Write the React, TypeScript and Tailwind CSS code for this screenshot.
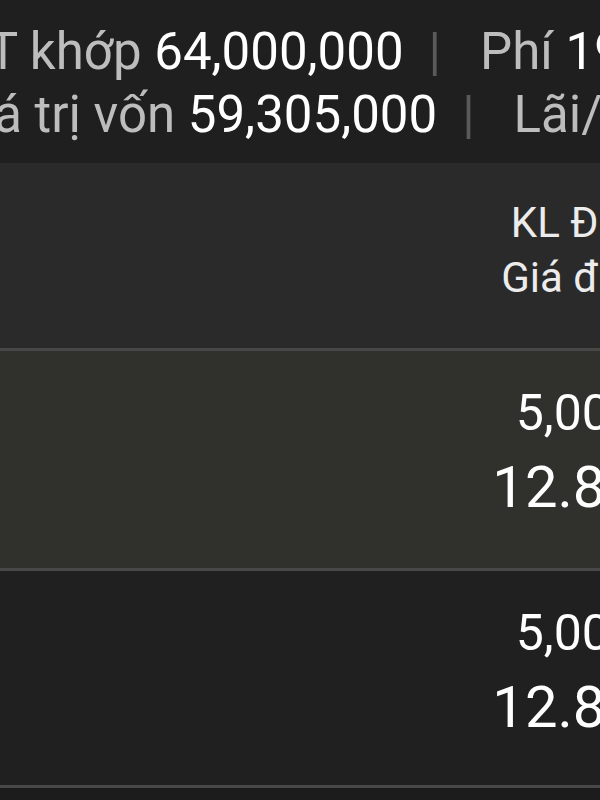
import React from 'react';

type Order = { qty: string; price: string; bg: string; h: string };

const orders: Order[] = [
  { qty: '5,000', price: '12.80', bg: 'bg-[#30302c]', h: 'h-[217px]' },
  { qty: '5,000', price: '12.80', bg: 'bg-[#202020]', h: 'h-[214px]' },
];

function Sep() {
  return <span className="ml-[25px] mr-[39px] text-[#5a5a5a]">|</span>;
}

export default function App() {
  return (
    <div className="w-[600px] h-[800px] overflow-hidden bg-[#1c1c1c] font-['Roboto',sans-serif]">
      {/* summary bar */}
      <div className="h-[163px] bg-[#1f1f1f] pt-[20px] text-[51px] leading-[63px] whitespace-nowrap">
        <div className="ml-[-47px]">
          <span className="text-[#bdbdbd]">GT khớp </span>
          <span className="text-white">64,000,000</span>
          <Sep />
          <span className="text-[#bdbdbd]">Phí </span>
          <span className="text-white">192,000</span>
        </div>
        <div className="ml-[-53px]">
          <span className="text-[#bdbdbd]">Giá trị vốn </span>
          <span className="text-white">59,305,000</span>
          <Sep />
          <span className="text-[#bdbdbd]">Lãi/lỗ </span>
          <span className="text-white">4,503,000</span>
        </div>
      </div>

      {/* table header */}
      <div className="h-[185px] bg-[#2a2a2a] border-b-[3px] border-[#484848] box-content">
        <div className="w-[650px] pr-[15px] pt-[32px] text-right text-[42px] leading-[55px] text-[#ececec] whitespace-nowrap">
          <div>KL Đặt</div>
          <div>Giá đặt</div>
        </div>
      </div>

      {orders.map((o, i) => (
        <div key={i} className={`${o.h} ${o.bg} border-b-[3px] border-[#484848] box-content`}>
          <div className="w-[650px] pr-[12px] pt-[32px] text-right text-white whitespace-nowrap">
            <div className="text-[50px] leading-[60px]">{o.qty}</div>
            <div className="mt-[9px] text-[58px] leading-[70px]">{o.price}</div>
          </div>
        </div>
      ))}
    </div>
  );
}
